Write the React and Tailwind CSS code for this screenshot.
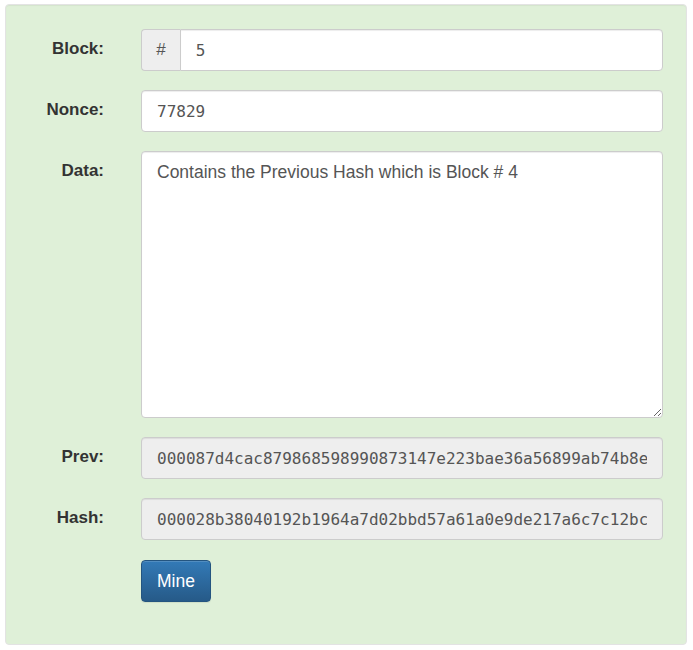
import React from "react";

const mono = { fontFamily: '"DejaVu Sans Mono", monospace' };

function Label({ children }) {
  return (
    <label className="w-[98px] shrink-0 text-right text-[17px] font-bold leading-[24px] pt-[8px] text-[#333]">
      {children}
    </label>
  );
}

function Row({ label, children }) {
  return (
    <div className="flex items-start">
      <Label>{label}</Label>
      <div className="ml-[37px] flex-1">{children}</div>
    </div>
  );
}

const inputCls =
  "block w-full h-[42px] border border-[#ccc] rounded-[4px] px-[15px] text-[16px] text-[#555] shadow-[inset_0_1px_1px_rgba(0,0,0,0.075)] outline-none";

export default function App() {
  const block = 5;
  const nonce = 77829;
  const data = "Contains the Previous Hash which is Block # 4";
  const prev = "000087d4cac879868598990873147e223bae36a56899ab74b8e";
  const hash = "000028b38040192b1964a7d02bbd57a61a0e9de217a6c7c12bc";

  return (
    <div className="pt-[4px] pl-[5px]" style={{ fontFamily: '"Liberation Sans", Arial, sans-serif' }}>
      <div className="w-[682px] h-[641px] bg-[#dff0d8] border border-[#e3e3e3] rounded-[4px] shadow-[inset_0_1px_1px_rgba(0,0,0,0.05)] pt-[24px] pr-[23px]">
        <div className="flex flex-col gap-[19px]">
          <Row label="Block:">
            <div className="flex h-[42px]">
              <span className="flex items-center justify-center w-[42px] bg-[#eee] border border-[#ccc] border-r-0 rounded-l-[4px] text-[17px] text-[#555]">
                #
              </span>
              <input
                readOnly
                value={block}
                style={mono}
                className={inputCls + " rounded-l-none bg-white"}
              />
            </div>
          </Row>

          <Row label="Nonce:">
            <input readOnly value={nonce} style={mono} className={inputCls + " bg-white"} />
          </Row>

          <Row label="Data:">
            <textarea
              readOnly
              value={data}
              className="block w-full h-[267px] border border-[#ccc] rounded-[4px] bg-white px-[15px] pt-[9px] pb-[6px] text-[17.5px] leading-[23px] text-[#555] shadow-[inset_0_1px_1px_rgba(0,0,0,0.075)] outline-none"
            />
          </Row>

          <Row label="Prev:">
            <input readOnly value={prev} style={mono} className={inputCls + " bg-[#eee]"} />
          </Row>

          <Row label="Hash:">
            <input readOnly value={hash} style={mono} className={inputCls + " bg-[#eee]"} />
          </Row>

          <div className="flex mt-[1px]">
            <div className="w-[98px] shrink-0" />
            <div className="ml-[37px]">
              <button className="w-[70px] h-[42px] rounded-[4px] border border-[#245580] bg-gradient-to-b from-[#337ab7] to-[#265a88] text-white text-[17.5px] shadow-[inset_0_1px_0_rgba(255,255,255,0.15),0_1px_1px_rgba(0,0,0,0.075)]">
                Mine
              </button>
            </div>
          </div>
        </div>
      </div>
    </div>
  );
}
